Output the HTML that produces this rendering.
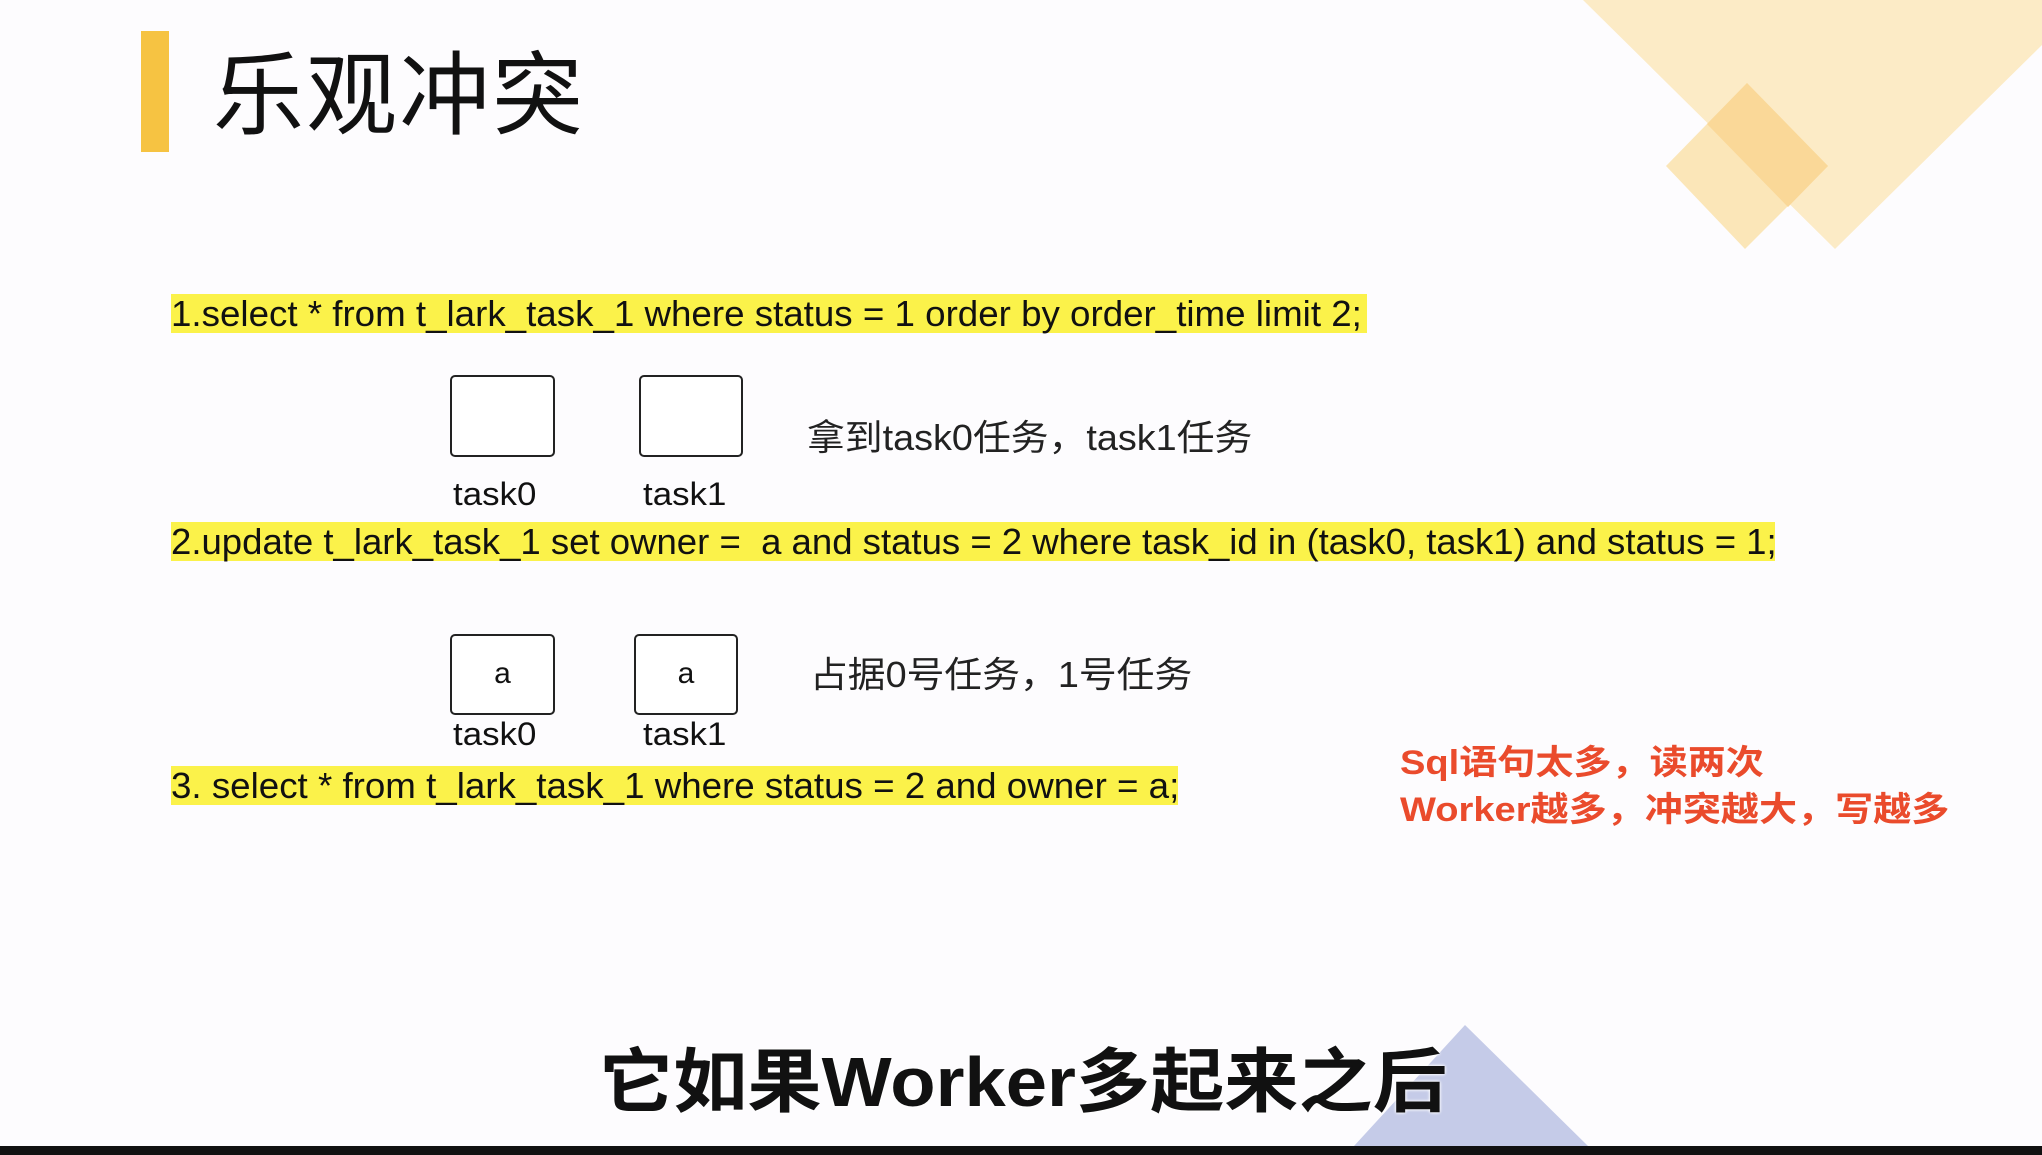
<!DOCTYPE html>
<html><head><meta charset="utf-8"><style>
body{margin:0;width:2042px;height:1155px;overflow:hidden;background:#fdfcfe;position:relative;font-family:"Liberation Sans","Noto Sans CJK SC",sans-serif;}
.a{position:absolute;}
.hl{position:absolute;background:#fbf24a;height:39px;}
.hl span{position:absolute;left:0;top:1px;font-size:36px;line-height:38px;white-space:nowrap;transform:scaleX(1.02);transform-origin:left center;color:#111;}
.box{position:absolute;border:2.5px solid #222;border-radius:5px;box-sizing:border-box;background:#fff;font-size:30px;text-align:center;color:#111;}
.lab{position:absolute;font-size:32px;color:#111;transform:scaleX(1.09);transform-origin:left;}
.cn{position:absolute;font-size:36px;color:#222;white-space:nowrap;transform:scaleX(1.05);transform-origin:left;}
</style></head><body>
<svg class="a" style="left:0;top:0" width="2042" height="1155">
<polygon points="1583,0 2042,0 2042,45 1835,249" fill="#fcebc6"/>
<polygon points="1666,166 1747,83 1828,166 1745,249" fill="#fbe3b0" opacity="0.9"/>
<polygon points="1707,124 1747,83 1828,166 1788,207" fill="#fad898"/>
<polygon points="1465,1025 1588,1146 1354,1146" fill="#c5cbe8"/>
<rect x="0" y="1146" width="2042" height="9" fill="#111"/>
</svg>
<div class="a" style="left:141px;top:31px;width:28px;height:121px;background:#f6c342"></div>
<div class="a" style="left:213px;top:47px;font-size:91px;line-height:100px;color:#111;letter-spacing:2px">乐观冲突</div>

<div class="hl" style="left:171px;top:294px;width:1196px"><span>1.select * from t_lark_task_1 where status = 1 order by order_time limit 2;</span></div>
<div class="box" style="left:450px;top:375px;width:105px;height:82px"></div>
<div class="box" style="left:639px;top:375px;width:104px;height:82px"></div>
<div class="lab" style="left:453px;top:476px">task0</div>
<div class="lab" style="left:643px;top:476px">task1</div>
<div class="cn" style="left:807px;top:409px">拿到task0任务，task1任务</div>

<div class="hl" style="left:171px;top:522px;width:1604px"><span style="transform:scaleX(1.015)">2.update t_lark_task_1 set owner =&nbsp; a and status = 2 where task_id in (task0, task1) and status = 1;</span></div>
<div class="box" style="left:450px;top:634px;width:105px;height:81px;line-height:76px">a</div>
<div class="box" style="left:634px;top:634px;width:104px;height:81px;line-height:76px">a</div>
<div class="lab" style="left:453px;top:716px">task0</div>
<div class="lab" style="left:643px;top:716px">task1</div>
<div class="cn" style="left:810px;top:646px">占据0号任务，1号任务</div>

<div class="hl" style="left:171px;top:766px;width:1007px"><span>3. select * from t_lark_task_1 where status = 2 and owner = a;</span></div>

<div class="a" style="left:1400px;top:740px;font-size:34px;line-height:47px;font-weight:bold;color:#ea4b2c;white-space:nowrap;transform:scaleX(1.12);transform-origin:left">Sql语句太多，读两次<br>Worker越多，冲突越大，写越多</div>

<div class="a" style="left:599px;top:1040px;font-size:70px;line-height:84px;font-weight:bold;color:#111;white-space:nowrap;text-shadow:0 0 3px #fff,0 0 3px #fff;transform:scaleX(1.06);transform-origin:left">它如果Worker多起来之后</div>
</body></html>
